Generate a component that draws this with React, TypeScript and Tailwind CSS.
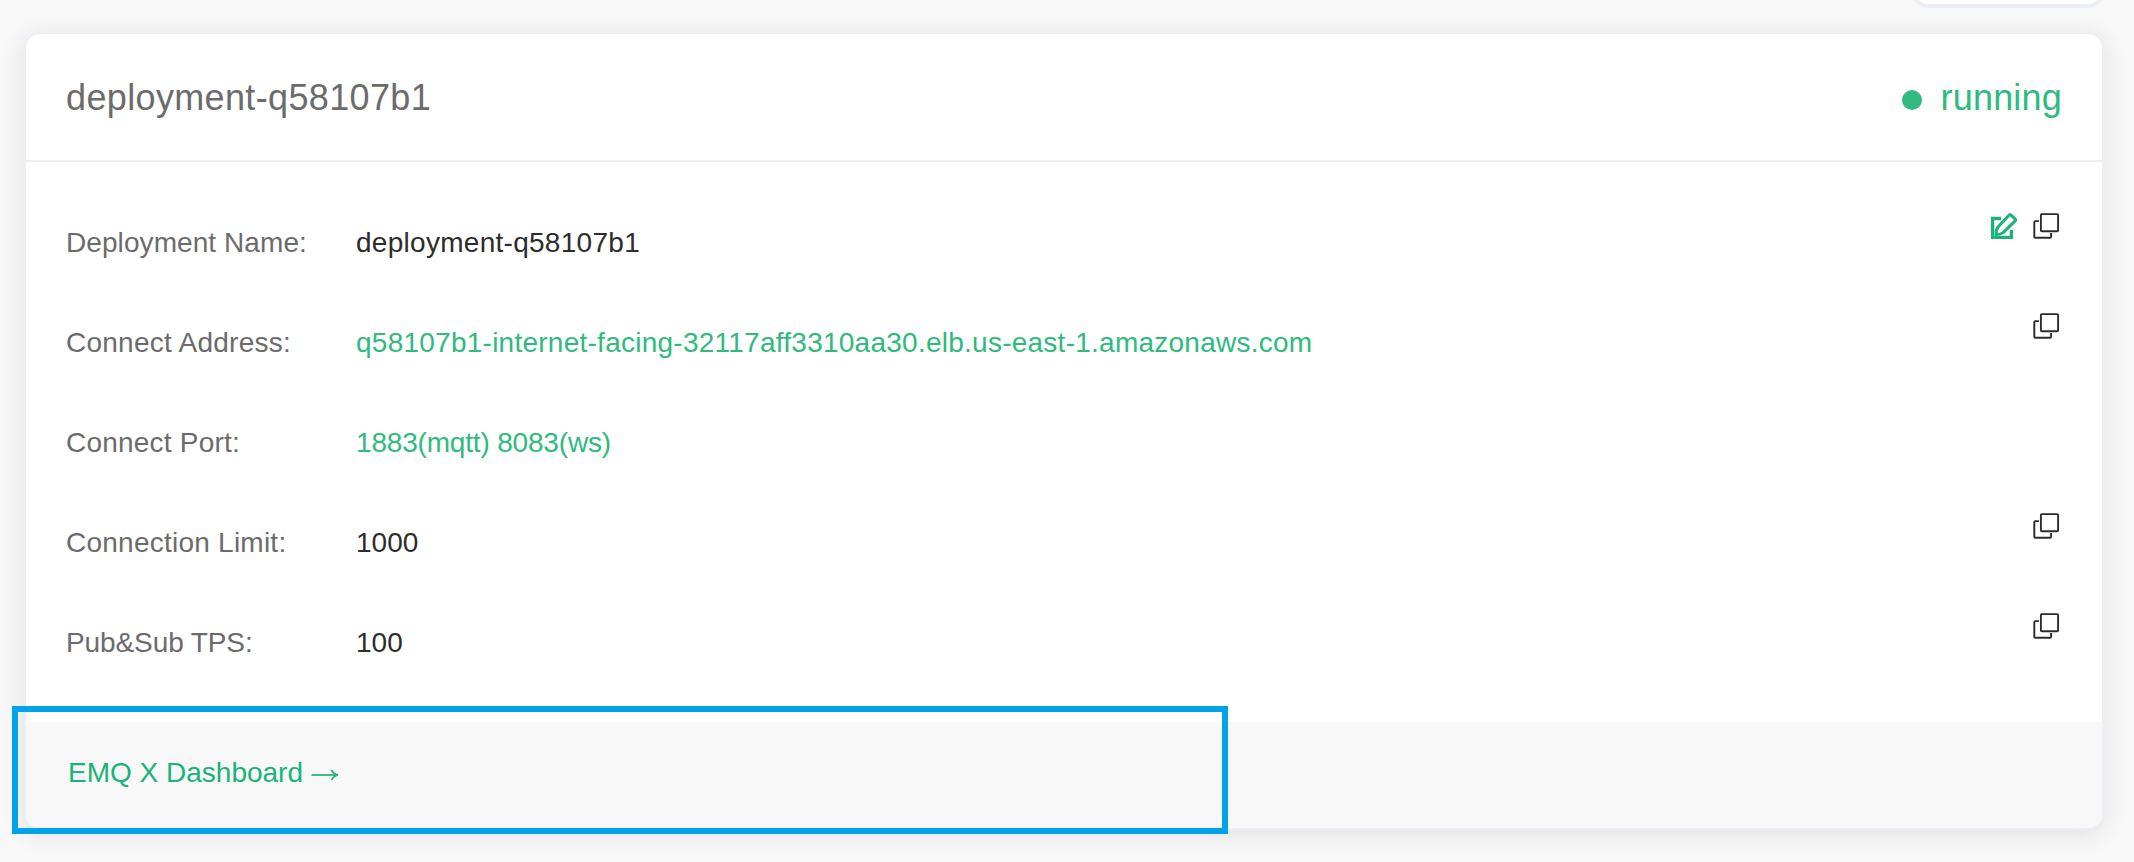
import type { ReactNode } from "react";

function CopyIcon() {
  return (
    <svg className="block h-[28px] w-[28px]" viewBox="0 0 28 28" fill="none" stroke="#2c2c2c" strokeWidth="1.9">
      <rect x="8.9" y="2.1" width="17.2" height="17.2" rx="1" />
      <path d="M6.9 9.1H3.3a1 1 0 0 0-1 1v14.6a1 1 0 0 0 1 1h14.8a1 1 0 0 0 1-1v-3.7" />
    </svg>
  );
}

function EditIcon() {
  return (
    <svg className="block h-[28px] w-[28px]" viewBox="0 0 28 28" fill="none" stroke="#1bb377">
      <path d="M11 6.5H2.6v18.9h18.8V18" strokeWidth="3.3" />
      <path
        d="M19 3.2q1-1 2-.1l4 3.8q1 1 .1 2L13.2 20.6q-2.4 1.8-7.2 1.8 .1-4.8 2-7.4z"
        strokeWidth="3"
        strokeLinejoin="round"
      />
    </svg>
  );
}

type RowProps = {
  label: string;
  value: string;
  labelSpacing: string;
  valueSpacing: string;
  green?: boolean;
  children?: ReactNode;
};

function Row({ label, value, labelSpacing, valueSpacing, green, children }: RowProps) {
  return (
    <div className="flex h-[100px] items-start">
      <dt className={`w-[290px] shrink-0 pt-[21px] leading-[40px] text-[#6b6b6b] ${labelSpacing}`}>{label}</dt>
      <dd className={`grow pt-[21px] leading-[40px] ${valueSpacing} ${green ? "text-[#2fba7e]" : "text-[#2c2c2c]"}`}>
        {value}
      </dd>
      <dd className="flex gap-[14px] pt-[10px]">{children}</dd>
    </div>
  );
}

export default function App() {
  return (
    <div className="relative h-[862px] w-[2134px] overflow-hidden bg-[#f8f8f8] px-[24px] pt-[32px] font-['Liberation_Sans',Arial,sans-serif] text-[28px]">
      <div className="absolute -top-[52px] left-[1912px] h-[60px] w-[192px] rounded-[16px] border-4 border-[#ebeef5] bg-white" />
      <section className="relative flex h-[798px] w-[2080px] flex-col rounded-[16px] border-2 border-[#ebeef5] bg-white shadow-[0_4px_24px_rgba(0,0,0,0.1)]">
        <header className="flex h-[128px] shrink-0 items-center justify-between border-b-2 border-[#ebeef5] px-[40px] pt-[2px] text-[36px]">
          <h1 className="tracking-[0.36px] text-[#6b6b6b]">deployment-q58107b1</h1>
          <div className="flex items-center gap-[19px] tracking-[0.2px] text-[#2fba7e]">
            <span className="mt-[4px] h-[20px] w-[20px] rounded-full bg-[#2fba7e]" />
            running
          </div>
        </header>
        <dl className="grow pl-[40px] pr-[42px] pt-[40px]">
          <Row
            label="Deployment Name:"
            value="deployment-q58107b1"
            labelSpacing="tracking-[0.08px]"
            valueSpacing="tracking-[0.28px]"
          >
            <EditIcon />
            <CopyIcon />
          </Row>
          <Row
            label="Connect Address:"
            value="q58107b1-internet-facing-32117aff3310aa30.elb.us-east-1.amazonaws.com"
            labelSpacing="tracking-[0.25px]"
            valueSpacing="tracking-[0.25px]"
            green
          >
            <CopyIcon />
          </Row>
          <Row
            label="Connect Port:"
            value="1883(mqtt) 8083(ws)"
            labelSpacing="tracking-[0.22px]"
            valueSpacing="tracking-[-0.18px]"
            green
          />
          <Row
            label="Connection Limit:"
            value="1000"
            labelSpacing="tracking-[0.24px]"
            valueSpacing="tracking-normal"
          >
            <CopyIcon />
          </Row>
          <Row label="Pub&Sub TPS:" value="100" labelSpacing="tracking-[-0.1px]" valueSpacing="tracking-normal">
            <CopyIcon />
          </Row>
        </dl>
        <footer className="flex h-[106px] shrink-0 items-center gap-[8px] rounded-b-[14px] bg-[#f8f8f8] px-[42px] pb-[4px] text-[#1bb377]">
          <span>EMQ X Dashboard</span>
          <svg className="mt-[3px] h-[12px] w-[28px]" viewBox="0 0 28 12" fill="none" stroke="#1bb377" strokeWidth="1.7">
            <path d="M0.5 6H26" />
            <path d="M20.5 1Q22.5 5 27 6Q22.5 7 20.5 11" />
          </svg>
        </footer>
      </section>
      <div className="absolute left-[12px] top-[706px] h-[128px] w-[1216px] border-[6px] border-[#00a2e8]" />
    </div>
  );
}
